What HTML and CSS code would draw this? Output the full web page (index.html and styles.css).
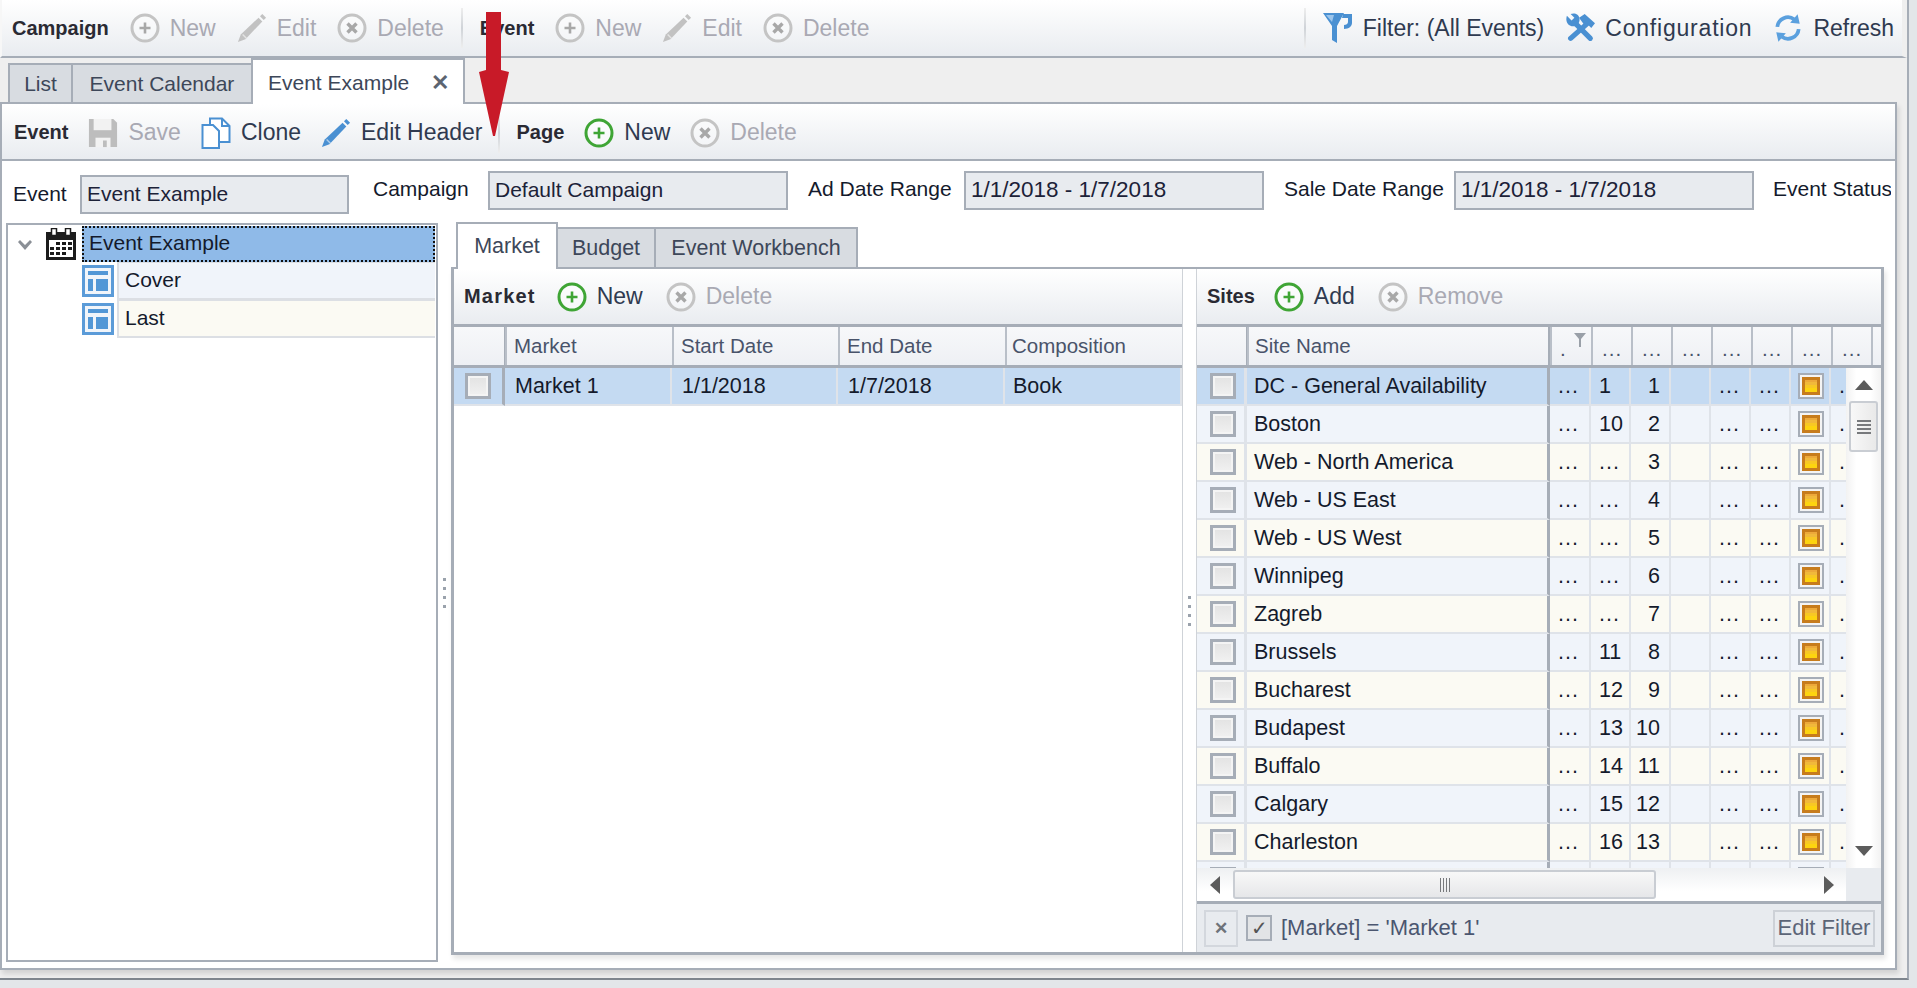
FILE: index.html
```html
<!DOCTYPE html>
<html lang="en">
  <head>
    <meta charset="UTF-8" />
    <meta name="viewport" content="width=device-width, initial-scale=1.0" />
    <title>Event Example</title>
    <link rel="stylesheet" href="styles.css">
  </head>
  <body>
    <svg class="defs" width="0" height="0">
      <symbol id="i-plus" viewBox="0 0 30 32"><circle cx="15" cy="16" r="13" fill="#fff" fill-opacity=".3" stroke="#c4c4c4" stroke-width="3"/><path d="M15 10.500v11M9.500 16h11" stroke="#a8a8a8" stroke-width="2.600"/></symbol>
      <symbol id="i-plus-on" viewBox="0 0 30 32"><circle cx="15" cy="16" r="13" fill="#fff" fill-opacity=".5" stroke="#3fa535" stroke-width="3"/><path d="M15 10.500v11M9.500 16h11" stroke="#3fa535" stroke-width="2.600"/></symbol>
      <symbol id="i-del" viewBox="0 0 30 32"><circle cx="15" cy="16" r="13" fill="#fff" fill-opacity=".3" stroke="#c4c4c4" stroke-width="3"/><path d="M10.500 11.500l9 9M19.500 11.500l-9 9" stroke="#a8a8a8" stroke-width="3.400"/></symbol>
      <symbol id="i-pencil" viewBox="0 0 32 32"><path d="M1 31l3-8L23 5l4 4L9 28z" fill="currentColor"/><path d="M24.500 3.500L27 1l4 4-2.500 2.500z" fill="currentColor"/><path d="M6 23l4 4" stroke="#fff" stroke-opacity=".55" stroke-width="1.500"/></symbol>
      <symbol id="i-save" viewBox="0 0 32 32"><path d="M1 1h26l4 4v26H1z" fill="#bdbdbd"/><path d="M6 1h19v12H6z" fill="#f2f2f2"/><path d="M8 21h16v10H8z" fill="#f2f2f2"/><path d="M16 24h4v7h-4z" fill="#bdbdbd"/></symbol>
      <symbol id="i-clone" viewBox="0 0 30 32"><path d="M9 1.500h12l7.500 7.500v16H9z" fill="#fff" stroke="#4a90d2" stroke-width="2"/><path d="M21 1.500V9h7.500" fill="none" stroke="#4a90d2" stroke-width="2"/><path d="M1.500 8H12l6 6v17H1.500z" fill="#fff" stroke="#4a90d2" stroke-width="2"/></symbol>
      <symbol id="i-funnel" viewBox="0 0 30 32"><path d="M0 1h21l-7 13v17l-5-3V14z" fill="#4a90d2"/><path d="M3 3h8l-2 7z" fill="#9cc5ec"/><path d="M20 2h9v9c0 3-3 6-8 6v-4c2 0 4-1 4-3V6h-6z" fill="#4a90d2"/></symbol>
      <symbol id="i-tools" viewBox="0 0 32 32"><path d="M10 10l17 17" stroke="#4a90d2" stroke-width="5.500" stroke-linecap="round"/><path d="M2 3l5 5 3-3-4-4c4-1.500 9 0 9.500 5S12 15 7 14 .5 8 2 3z" fill="#4a90d2"/><path d="M24 11L6 27" stroke="#4a90d2" stroke-width="5.500" stroke-linecap="round"/><path d="M15 5l6-4 11 10-4 5-5-5-3 1z" fill="#4a90d2"/></symbol>
      <symbol id="i-refresh" viewBox="0 0 28 30"><path d="M4 14a10 10 0 0 1 16-7" fill="none" stroke="#5ba0de" stroke-width="3.500"/><path d="M24 16a10 10 0 0 1-16 7" fill="none" stroke="#5ba0de" stroke-width="3.500"/><path d="M23 2l2 9-9-1zM5 28l-2-9 9 1z" fill="#5ba0de"/></symbol>
      <symbol id="i-cal" viewBox="0 0 30 32"><path d="M0 4h30v28H0z" fill="#1c1c1c"/><path d="M3 12h24v17H3z" fill="#fff"/><path d="M5.500 .5h5v7h-5zM19.500 .5h5v7h-5z" fill="#fff" stroke="#1c1c1c" stroke-width="1.500"/><path d="M10 14h4v3h-4zM16 14h4v3h-4zM22 14h4v3h-4zM4 19h4v3H4zM10 19h4v3h-4zM16 19h4v3h-4zM22 19h4v3h-4zM4 24h4v3H4zM10 24h4v3h-4zM16 24h4v3h-4z" fill="#1c1c1c"/></symbol>
      <symbol id="i-page" viewBox="0 0 32 32"><path d="M0 0h32v32H0z" fill="#5b9bd8"/><path d="M3 3h26v26H3z" fill="#f1f5fa"/><path d="M6 6h20v4H6zM14 14h12v12H14zM6 14h5v12H6z" fill="#5297d6"/></symbol>
      <symbol id="i-chev" viewBox="0 0 14 10"><path d="M0 2l2-2 5 5 5-5 2 2-7 8z" fill="#8a8f96"/></symbol>
    </svg>

    <div class="window">
      <div class="toolbar top-bar">
        <b class="tb-label">Campaign</b>
        <span class="tb-btn off"><svg class="ic"><use href="#i-plus"/></svg>New</span>
        <span class="tb-btn off"><svg class="ic"><use href="#i-pencil"/></svg>Edit</span>
        <span class="tb-btn off"><svg class="ic"><use href="#i-del"/></svg>Delete</span>
        <i class="tb-sep"></i>
        <b class="tb-label">Event</b>
        <span class="tb-btn off"><svg class="ic"><use href="#i-plus"/></svg>New</span>
        <span class="tb-btn off"><svg class="ic"><use href="#i-pencil"/></svg>Edit</span>
        <span class="tb-btn off"><svg class="ic"><use href="#i-del"/></svg>Delete</span>
        <span class="tb-spring"></span>
        <i class="tb-sep"></i>
        <span class="tb-btn"><svg class="ic"><use href="#i-funnel"/></svg>Filter: (All Events)</span>
        <span class="tb-btn tb-config"><svg class="ic"><use href="#i-tools"/></svg>Configuration</span>
        <span class="tb-btn"><svg class="ic"><use href="#i-refresh"/></svg>Refresh</span>
      </div>

      <div class="tab-strip">
        <span class="tab tab-list">List</span>
        <span class="tab tab-cal">Event Calendar</span>
        <span class="tab active tab-ex">Event Example<span class="tab-x">&#10005;</span></span>
      </div>

      <div class="doc">
        <div class="toolbar doc-bar">
          <b class="tb-label">Event</b>
          <span class="tb-btn off"><svg class="ic"><use href="#i-save"/></svg>Save</span>
          <span class="tb-btn"><svg class="ic"><use href="#i-clone"/></svg>Clone</span>
          <span class="tb-btn"><svg class="ic pencil-on"><use href="#i-pencil"/></svg>Edit Header</span>
          <i class="tb-sep"></i>
          <b class="tb-label">Page</b>
          <span class="tb-btn"><svg class="ic"><use href="#i-plus-on"/></svg>New</span>
          <span class="tb-btn off"><svg class="ic"><use href="#i-del"/></svg>Delete</span>
        </div>

        <div class="fields">
          <label class="fld-label fld-event">Event</label>
          <div class="fld-box box-event">Event Example</div>
          <label class="fld-label fld-camp">Campaign</label>
          <div class="fld-box box-camp">Default Campaign</div>
          <label class="fld-label fld-ad">Ad Date Range</label>
          <div class="fld-box box-range">1/1/2018 - 1/7/2018</div>
          <label class="fld-label fld-sale">Sale Date Range</label>
          <div class="fld-box box-range">1/1/2018 - 1/7/2018</div>
          <label class="fld-label fld-status">Event Status</label>
        </div>

        <div class="work">
          <div class="tree">
            <div class="tree-root">
              <svg class="chev"><use href="#i-chev"/></svg>
              <svg class="cal"><use href="#i-cal"/></svg>
              <div class="tree-sel">Event Example</div>
            </div>
            <div class="tree-page">
              <svg class="page-ic"><use href="#i-page"/></svg>
              <div class="tree-name blue">Cover</div>
            </div>
            <div class="tree-page">
              <svg class="page-ic"><use href="#i-page"/></svg>
              <div class="tree-name cream">Last</div>
            </div>
          </div>

          <div class="split-v"><i></i><i></i><i></i><i></i></div>

          <div class="right">
            <div class="sub-tabs">
              <span class="sub-tab active st-market">Market</span>
              <span class="sub-tab st-budget">Budget</span>
              <span class="sub-tab st-bench">Event Workbench</span>
            </div>
            <div class="sub-panel">
              <div class="market">
                <div class="toolbar sec-bar">
                  <b class="tb-label label-market">Market</b>
                  <span class="tb-btn"><svg class="ic"><use href="#i-plus-on"/></svg>New</span>
                  <span class="tb-btn off"><svg class="ic"><use href="#i-del"/></svg>Delete</span>
                </div>
                <div class="grid-head market-cols">
                  <span class="gh gh-check"></span>
                  <span class="gh">Market</span>
                  <span class="gh">Start Date</span>
                  <span class="gh">End Date</span>
                  <span class="gh">Composition</span>
                </div>
                <div class="row sel market-cols">
                  <span class="cell cell-check"><i class="check"></i></span>
                  <span class="cell">Market 1</span>
                  <span class="cell">1/1/2018</span>
                  <span class="cell">1/7/2018</span>
                  <span class="cell">Book</span>
                </div>
              </div>

              <div class="split-m"><i></i><i></i><i></i><i></i></div>

              <div class="sites">
                <div class="toolbar sec-bar">
                  <b class="tb-label">Sites</b>
                  <span class="tb-btn"><svg class="ic"><use href="#i-plus-on"/></svg>Add</span>
                  <span class="tb-btn off"><svg class="ic"><use href="#i-del"/></svg>Remove</span>
                </div>
                <div class="grid-head sites-cols">
                  <span class="gh gh-check"></span>
                  <span class="gh gh-name">Site Name</span>
                  <span class="gh gh-n gh-filter">.<svg class="mini-filter" viewBox="0 0 12 14"><path d="M0 0h12L7 6v8H5V6z" fill="#9aa0a8"/></svg></span>
                  <span class="gh gh-n">...</span>
                  <span class="gh gh-n">...</span>
                  <span class="gh gh-n">...</span>
                  <span class="gh gh-n">...</span>
                  <span class="gh gh-n">...</span>
                  <span class="gh gh-n">...</span>
                  <span class="gh gh-n">...</span>
                  <span class="gh gh-n"></span>
                </div>
                <div class="sites-body">
                  <div class="sites-rows" id="sites-rows"></div>
                  <div class="vscroll">
                    <span class="arrow-up"></span>
                    <span class="v-thumb"><i></i><i></i><i></i><i></i></span>
                    <span class="arrow-down"></span>
                  </div>
                </div>
                <div class="hscroll-row">
                  <div class="hscroll">
                    <span class="arrow-left"></span>
                    <span class="h-thumb"><i></i><i></i><i></i><i></i></span>
                    <span class="arrow-right"></span>
                  </div>
                  <div class="corner"></div>
                </div>
                <div class="filter-bar">
                  <span class="fb-x">&#10005;</span>
                  <span class="fb-check">&#10003;</span>
                  <span class="fb-text">[Market] = 'Market 1'</span>
                  <span class="fb-edit">Edit Filter</span>
                </div>
              </div>
            </div>
          </div>
        </div>
      </div>
    </div>

    <svg class="red-arrow" viewBox="0 0 30 124"><path d="M7 0h15v58l8 2-14 64h-2L0 60l7-2z" fill="#c81a28"/></svg>

    <script src="app.js"></script>
  </body>
</html>
```

FILE: app.js
```js
const sites = [
  ["DC - General Availability", "1", "1"],
  ["Boston", "10", "2"],
  ["Web - North America", "...", "3"],
  ["Web - US East", "...", "4"],
  ["Web - US West", "...", "5"],
  ["Winnipeg", "...", "6"],
  ["Zagreb", "...", "7"],
  ["Brussels", "11", "8"],
  ["Bucharest", "12", "9"],
  ["Budapest", "13", "10"],
  ["Buffalo", "14", "11"],
  ["Calgary", "15", "12"],
  ["Charleston", "16", "13"],
  ["", "", ""],
];

const rows = sites.map(([name, a, b], i) => {
  const tone = i === 0 ? "sel" : i % 2 ? "blue" : "cream";
  const second = a === "..." ? "dots" : "";
  return `<div class="row ${i === 13 ? "blue" : tone} sites-cols">
    <span class="cell cell-check"><i class="check"></i></span>
    <span class="cell cell-name">${name}</span>
    <span class="cell cell-n dots">...</span>
    <span class="cell cell-n ${second}">${a}</span>
    <span class="cell cell-n cell-r">${b}</span>
    <span class="cell cell-n"></span>
    <span class="cell cell-n dots">...</span>
    <span class="cell cell-n dots">...</span>
    <span class="cell cell-n cell-state"><i class="state"></i></span>
    <span class="cell cell-n dots">...</span>
  </div>`;
});

document.getElementById("sites-rows").innerHTML = rows.join("");
```

FILE: styles.css
```css
* {
  box-sizing: border-box;
}
html,
body {
  margin: 0;
  height: 988px;
  overflow: hidden;
}
body {
  background: #e3e6e9;
  font-family: "Liberation Sans", Arial, sans-serif;
  font-size: 21px;
  color: #141a2c;
  position: relative;
}
.defs {
  position: absolute;
}
i {
  font-style: normal;
}
.window {
  width: 1909px;
  height: 980px;
  background: #efefef;
  border-right: 2px solid #a6adb7;
  border-bottom: 2px solid #7f868e;
}

/* toolbars */
.toolbar {
  display: flex;
  align-items: center;
  background: linear-gradient(#fff, #e9ecf0);
}
.top-bar {
  height: 58px;
  padding: 0 8px 0 10px;
  border-left: 2px solid #f7f7f7;
  border-right: 5px solid #efefef;
  border-bottom: 2px solid #a6adb7;
  gap: 21px;
}
.tb-label {
  font-size: 20px;
  color: #2a2a33;
}
.label-market {
  letter-spacing: 1.200px;
}
.tb-btn {
  display: flex;
  align-items: center;
  gap: 10px;
  font-size: 23px;
  color: #2f3a50;
  white-space: nowrap;
}
.tb-btn.off {
  color: #a9a9b3;
}
.tb-config {
  letter-spacing: 0.8px;
}
.ic {
  width: 30px;
  height: 32px;
  color: #c2c2c2;
  flex: none;
}
.pencil-on {
  color: #4a90d2;
}
.tb-sep {
  width: 2px;
  height: 40px;
  background: linear-gradient(#eee, #cfd3d8, #eee);
  margin: 0 -4px;
}
.tb-spring {
  flex: 1;
}

/* document tabs */
.tab-strip {
  height: 44px;
  padding-left: 8px;
  display: flex;
  align-items: flex-end;
}
.tab {
  height: 39px;
  display: flex;
  align-items: center;
  justify-content: center;
  background: #d8dce1;
  border: 2px solid #a6adb7;
  border-bottom: none;
  color: #3d4759;
  margin-right: -2px;
}
.tab.active {
  background: #fff;
  justify-content: flex-start;
  padding: 2px 0 0 15px;
  position: relative;
  z-index: 1;
  margin-bottom: -2px;
  height: 46px;
}
.tab-list {
  width: 65px;
}
.tab-cal {
  width: 182px;
}
.tab-ex {
  width: 214px;
}
.tab-x {
  margin-left: 22px;
  font-size: 22px;
  font-weight: bold;
  color: #5c6470;
}

/* document panel */
.doc {
  width: 1897px;
  height: 868px;
  background: #fff;
  border: 2px solid #a6adb7;
  box-shadow: 2px 4px 5px rgba(0, 0, 0, 0.12);
  overflow: hidden;
}
.doc-bar {
  height: 57px;
  padding: 2px 0 0 12px;
  gap: 20px;
  border-bottom: 2px solid #a6adb7;
}
.fields {
  width: 1889px;
  height: 62px;
  display: flex;
  align-items: flex-start;
  padding: 10px 0 0 11px;
  overflow: hidden;
  white-space: nowrap;
}
.fld-label {
  height: 38px;
  line-height: 36px;
  flex: none;
}
.fld-box {
  height: 39px;
  line-height: 33px;
  flex: none;
  padding-left: 5px;
  background: #e8ebef;
  border: 2px solid #a6adb7;
  color: #1c2238;
}
.fld-event {
  width: 67px;
  margin-top: 5px;
}
.box-event {
  width: 269px;
  margin-top: 4px;
}
.fld-camp {
  margin-left: 24px;
  width: 115px;
}
.box-camp {
  width: 300px;
}
.fld-ad {
  margin-left: 20px;
  width: 156px;
}
.box-range {
  width: 300px;
  font-size: 22.5px;
}
.fld-sale {
  margin-left: 20px;
  width: 170px;
}
.fld-status {
  margin-left: 19px;
}
.work {
  display: flex;
  height: 741px;
  padding-left: 4px;
}

/* tree */
.tree {
  width: 432px;
  height: 739px;
  border: 2px solid #a6adb7;
}
.tree-root {
  height: 37px;
  display: flex;
  align-items: center;
}
.chev {
  width: 14px;
  height: 10px;
  margin: 2px 0 0 10px;
}
.cal {
  width: 30px;
  height: 32px;
  margin-left: 14px;
}
.tree-sel {
  margin-left: 6px;
  flex: 1;
  height: 36px;
  line-height: 30px;
  padding-left: 5px;
  margin-right: 1px;
  background: #8fbae8;
  border: 2px dotted #111;
}
.tree-page {
  height: 38px;
  display: flex;
  align-items: center;
  padding-left: 74px;
}
.page-ic {
  width: 32px;
  height: 32px;
  flex: none;
}
.tree-name {
  flex: 1;
  height: 38px;
  line-height: 34px;
  margin: 0 1px 0 3px;
  padding-left: 6px;
  border: 1px solid #dcdfe4;
  border-width: 1px 0 2px 2px;
}
.blue {
  background: #f0f4fa;
}
.cream {
  background: #fbfaf3;
}
.split-v,
.split-m {
  display: flex;
  flex-direction: column;
  justify-content: center;
  gap: 6px;
  align-items: center;
  flex: none;
}
.split-v {
  width: 13px;
  height: 739px;
}
.split-v i,
.split-m i {
  width: 3px;
  height: 3px;
  background: #9aa2ac;
}

/* market and sites */
.right {
  width: 1434px;
}
.sub-tabs {
  height: 44px;
  display: flex;
  align-items: flex-end;
  padding-left: 5px;
}
.sub-tab {
  height: 40px;
  display: flex;
  align-items: center;
  justify-content: center;
  background: #d8dce1;
  border: 2px solid #a6adb7;
  border-bottom: none;
  color: #3d4759;
  font-size: 21.5px;
  margin-right: -2px;
}
.sub-tab.active {
  height: 47px;
  background: #fff;
  position: relative;
  z-index: 1;
  margin-bottom: -2px;
}
.st-market {
  width: 102px;
}
.st-budget {
  width: 100px;
}
.st-bench {
  width: 204px;
}
.sub-panel {
  width: 1433px;
  height: 688px;
  display: flex;
  border: 3px solid #a6adb7;
  border-top-width: 2px;
  box-shadow: 2px 4px 5px rgba(0, 0, 0, 0.1);
  background: #fff;
}
.market {
  width: 728px;
  flex: none;
}
.sec-bar {
  height: 58px;
  padding-left: 10px;
  gap: 23px;
  border-bottom: 3px solid #a6adb7;
}
.sec-bar .tb-label {
  margin-right: -4px;
}
.sec-bar .label-market {
  margin-right: -2px;
}
.split-m {
  width: 15px;
  height: 100%;
  border-left: 1px solid #cfd3d8;
  border-right: 1px solid #cfd3d8;
}
.sites {
  width: 684px;
  flex: none;
  display: flex;
  flex-direction: column;
  overflow: hidden;
}
.grid-head {
  height: 41px;
  border-bottom: 3px solid #a6adb7;
  background: linear-gradient(#f7f8fa, #eef0f4);
  color: #49536a;
  font-size: 20.5px;
}
.gh {
  display: flex;
  align-items: center;
  padding-left: 6px;
  border-left: 2px solid #b9bfc8;
  position: relative;
  overflow: hidden;
  white-space: nowrap;
}
.market .gh {
  padding-left: 7px;
}
.market .gh:last-child {
  padding-left: 5px;
}
.gh-check {
  border-left: none;
  border-right: 1px solid #a6adb7;
}
.market-cols {
  display: grid;
  grid-template-columns: 51px 167px 166px 167px 177px;
}
.sites-cols {
  display: grid;
  grid-template-columns: 50px 303px 41px repeat(6, 40px) 40px 10px;
}
.gh-name {
  border-right: 2px solid #a6adb7;
}
.gh-n {
  padding-left: 9px;
  padding-top: 6px;
  letter-spacing: 1px;
}
.gh-filter {
  padding-left: 8px;
}
.mini-filter {
  position: absolute;
  top: 6px;
  right: 5px;
  width: 12px;
  height: 14px;
}
.row {
  height: 38px;
  font-size: 21.5px;
}
.row.sel {
  background: #c4daf2;
}
.cell {
  display: flex;
  align-items: center;
  padding-left: 7px;
  border-right: 2px solid #dfe3e9;
  border-bottom: 2px solid #dfe3e9;
  overflow: hidden;
  white-space: nowrap;
}
.market .cell {
  padding-left: 10px;
}
.market .cell:last-child {
  padding-left: 8px;
}
.cell-check {
  padding-left: 13px;
  border-right: 3px solid #dfe3e9;
}
.market .cell-check {
  border-right: 3px solid #a6adb7;
  padding-left: 11px;
}
.cell-name {
  border-right: 3px solid #a6adb7;
}
.cell-n {
  padding-left: 8px;
}
.dots {
  letter-spacing: 1px;
}
.cell-r {
  justify-content: flex-end;
  padding-right: 9px;
}
.cell-state {
  padding-left: 7px;
}
.check {
  width: 26px;
  height: 26px;
  flex: none;
  border: 3px solid #a6adb7;
  background: linear-gradient(#e2e2e2, #f1f1f1);
  box-shadow: inset 0 0 0 2px #f4f4f4;
}
.state {
  width: 26px;
  height: 26px;
  flex: none;
  padding: 2px;
  border: 2px solid #a6adb7;
  background: #f4f4f4;
}
.state::before {
  content: "";
  display: block;
  box-sizing: border-box;
  height: 100%;
  border: 3px solid #c77c1c;
  background: linear-gradient(#eda93a 0 20%, #f1b93b 20% 40%, #f8c824 40% 70%, #fdd40f 70%);
}
.sites-body {
  height: 500px;
  display: flex;
  flex: none;
  overflow: hidden;
}
.sites-rows {
  width: 649px;
  overflow: hidden;
  flex: none;
}
.vscroll {
  width: 35px;
  flex: none;
  display: flex;
  flex-direction: column;
  align-items: center;
  padding-top: 12px;
  background: linear-gradient(90deg, #f2f2f2, #fff 30%, #fff 70%, #f2f2f2);
}
.arrow-up {
  width: 0;
  height: 0;
  border: 9px solid transparent;
  border-top: none;
  border-bottom: 10px solid #5c5c5c;
}
.v-thumb {
  width: 29px;
  height: 51px;
  margin-top: 11px;
  border: 2px solid #c9cdd3;
  border-radius: 3px;
  background: linear-gradient(90deg, #f8f8f8, #e9e9e9);
  display: flex;
  flex-direction: column;
  align-items: center;
  justify-content: center;
  gap: 2px;
}
.v-thumb i {
  width: 14px;
  height: 2px;
  background: #77797c;
}
.arrow-down {
  width: 0;
  height: 0;
  margin-top: auto;
  margin-bottom: 12px;
  border: 9px solid transparent;
  border-bottom: none;
  border-top: 10px solid #5c5c5c;
}
.hscroll-row {
  height: 36px;
  flex: none;
  display: flex;
  border-bottom: 3px solid #a6adb7;
}
.hscroll {
  width: 649px;
  display: flex;
  align-items: center;
  padding-left: 13px;
  background: linear-gradient(#eef0f2, #fff 70%);
}
.arrow-left {
  width: 0;
  height: 0;
  border: 9px solid transparent;
  border-left: none;
  border-right: 10px solid #5c5c5c;
}
.h-thumb {
  width: 423px;
  height: 29px;
  margin-left: 13px;
  border: 2px solid #c9cdd3;
  border-radius: 3px;
  background: linear-gradient(#f8f8f8, #e6e7e9);
  display: flex;
  align-items: center;
  justify-content: center;
  gap: 2px;
}
.h-thumb i {
  width: 1px;
  height: 14px;
  background: #77797c;
}
.arrow-right {
  width: 0;
  height: 0;
  margin-left: auto;
  margin-right: 12px;
  border: 9px solid transparent;
  border-right: none;
  border-left: 10px solid #5c5c5c;
}
.corner {
  flex: 1;
  background: #e8ebef;
}
.filter-bar {
  flex: 1;
  display: flex;
  align-items: center;
  padding: 0 6px 0 7px;
  background: #e8ebef;
  color: #4b5670;
  font-size: 22px;
}
.fb-x {
  width: 34px;
  height: 37px;
  border: 2px solid #d3d7dd;
  display: flex;
  align-items: center;
  justify-content: center;
  font-size: 17px;
  font-weight: bold;
  color: #6e737a;
}
.fb-check {
  width: 26px;
  height: 26px;
  margin-left: 8px;
  border: 2px solid #a6adb7;
  background: #e2e4e6;
  color: #555;
  font-size: 20px;
  line-height: 22px;
  text-align: center;
}
.fb-text {
  margin-left: 9px;
}
.fb-edit {
  margin-left: auto;
  width: 102px;
  height: 37px;
  border: 2px solid #cdd1d7;
  display: flex;
  align-items: center;
  justify-content: center;
  white-space: nowrap;
  color: #5c6577;
}

/* annotation drawn over the screenshot */
.red-arrow {
  position: absolute;
  left: 479px;
  top: 12px;
  width: 30px;
  height: 124px;
}
```
